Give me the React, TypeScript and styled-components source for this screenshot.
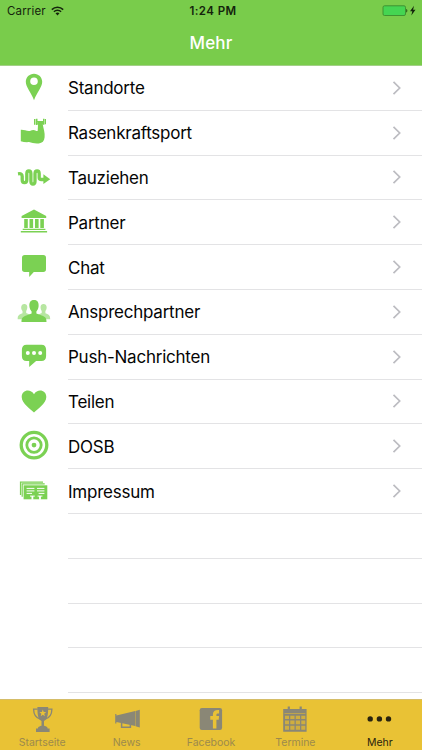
import React from "react";
import styled, { createGlobalStyle } from "styled-components";

const GREEN = "#7bd153";
const GRAY = "#8a8776";

const GlobalStyle = createGlobalStyle`
  * { box-sizing: border-box; }
  body { margin: 0; background: #fff; font-family: Inter, "Liberation Sans", sans-serif; }
`;

const Screen = styled.div`
  width: 422px;
  height: 750px;
  display: flex;
  flex-direction: column;
  overflow: hidden;
  background: #fff;
`;

const Header = styled.header`
  flex: none;
  height: 66px;
  background: #79cc4b;
  border-bottom: 1px solid #a3cf87;
`;

const StatusBar = styled.div`
  height: 22px;
  display: grid;
  grid-template-columns: 1fr auto 1fr;
  align-items: center;
  padding: 0 5px 0 7px;
  font-size: 11.5px;
  line-height: 22px;
  color: #14240c;
`;

const Carrier = styled.div`
  display: flex;
  align-items: center;
  gap: 5px;
  letter-spacing: 0.15px;
`;

const Clock = styled.div`
  font-weight: 600;
  letter-spacing: 0.42px;
  padding-left: 2px;
`;

const Power = styled.div`
  display: flex;
  justify-content: flex-end;
`;

const Title = styled.h1`
  margin: 0;
  height: 43px;
  line-height: 42px;
  text-align: center;
  color: #fff;
  font-size: 17px;
  font-weight: 500;
  letter-spacing: 0.15px;
`;

const List = styled.main`
  flex: 1;
  min-height: 0;
  overflow: hidden;
`;

const Row = styled.div`
  height: 44.8px;
  display: grid;
  grid-template-columns: 68px 1fr;
`;

const RowIcon = styled.svg`
  display: block;
  width: 68px;
  height: 44.8px;
  fill: ${GREEN};
`;

const RowBody = styled.div`
  display: flex;
  align-items: center;
  justify-content: space-between;
  padding-right: 19px;
  border-bottom: 1px solid #e3e3e5;
`;

const Label = styled.span`
  padding-top: 1px;
  font-size: 17px;
  line-height: 22px;
  letter-spacing: -0.24px;
  color: #050505;
`;

const Tabs = styled.nav`
  flex: none;
  height: 51px;
  display: grid;
  grid-template-columns: repeat(5, 1fr);
  background: #e9c235;
  border-top: 1px solid #d5bd68;
`;

const Tab = styled.div<{ $active?: boolean }>`
  display: flex;
  flex-direction: column;
  align-items: center;
  color: ${(p) => (p.$active ? "#29230f" : "#9c8a4c")};
  font-size: 10.5px;
  line-height: 14px;
  letter-spacing: -0.03px;
`;

const TabIcon = styled.svg`
  display: block;
  width: 40px;
  height: 36px;
  fill: ${GRAY};
`;

const items: { label: string; icon: React.ReactNode }[] = [
  {
    label: "Standorte",
    icon: (
      <path
        fillRule="evenodd"
        d="M34 8.1c-4.7 0-8.2 3.6-8.2 8.1 0 5.2 5.2 10.7 8.2 18.4 3-7.700 8.200-13.200 8.200-18.400 0-4.500-3.500-8.100-8.200-8.100zM34 11.800a3.800 3.800 0 1 1 0 7.600 3.800 3.800 0 0 1 0-7.600z"
      />
    ),
  },
  {
    label: "Rasenkraftsport",
    icon: (
      <>
        <path d="M20.800 19.200c3-.2 5.600 1.300 8.200 1.200 1.500-.1 2.500-1.200 4.400-1.100 2.100.1 3 1.600 4.300.8l.3-5.800-.9-1.200 1-2.300h4.500l.8 1.700-.6 1.700c.7 3.700 2.300 8.100 1.800 12.500-.3 3.800-2.300 5.900-5.800 6.100-4.300.3-6.600-.4-9.800-1.300-2.700.3-5.800-.1-8.200-.8z" />
        <path d="M34 8.500h1.500v5.700H34zM36 8.100h1.500v6.400H36zM37.500 10.400h6v1.400h-6zM43 8.100h1.400v6H43zM44.800 8.500h1.200v5.100h-1.200z" />
      </>
    ),
  },
  {
    label: "Tauziehen",
    icon: (
      <>
        <path
          d="M18 18.200c3.400-.5 4.200.7 4.200 2.700v3.300c0 3.800 4.600 3.800 4.600 0v-6c0-3.700 4.100-3.700 4.100 0v7.500c0 3.700 4.100 3.700 4.100 0v-7.500c0-3.700 4.200-3.700 4.200 0v4c0 1.300.8 1.700 2.300 1.700h4"
          fill="none"
          stroke={GREEN}
          strokeWidth="3.300"
        />
        <path d="M43.400 18.700l6.800 5-6.800 4.600z" />
      </>
    ),
  },
  {
    label: "Partner",
    icon: (
      <path d="M34 10l12.200 6.300v2H21.600v-2zM24.200 19.500h3.600v9h-3.600zM29.500 19.500h3.600v9h-3.600zM35 19.500h3.600v9H35zM40.300 19.500h3.600v9h-3.600zM22.700 29.200h22.700v1.300H22.700zM20.800 31.500h26.300v1.500H20.800z" />
    ),
  },
  {
    label: "Chat",
    icon: (
      <path d="M24.700 10.300h18.600a2.700 2.700 0 0 1 2.700 2.700v11.700a2.700 2.700 0 0 1-2.700 2.700h-9.500l-4.600 5v-5h-4.500a2.700 2.700 0 0 1-2.700-2.700V13a2.700 2.700 0 0 1 2.700-2.700z" />
    ),
  },
  {
    label: "Ansprechpartner",
    icon: (
      <>
        <path
          opacity=".55"
          d="M24.300 14.500c3.600-.2 3.700 4.400 1.900 7v2l4.500 2v4.100H17.700c0-4 1-4.300 4.800-6v-2.100c-2-2.500-1.900-6.800 1.800-7zM43.600 14.500c-3.600-.2-3.700 4.400-1.900 7v2l-4.500 2v4.100h13c0-4-1-4.300-4.800-6v-2.100c2-2.500 1.900-6.800-1.800-7z"
        />
        <path d="M34 10.300c3.700 0 4.900 2.500 4.600 6.400-.2 2.100-1 3.900-2.200 5.100v2.100l5.300 2.100c4.200 1.500 4.800 3.100 4.800 6.500h-25c0-3.400.6-5 4.800-6.500l5.300-2.100v-2.100c-1.200-1.200-2-3-2.200-5.100-.3-3.900.9-6.400 4.600-6.400z" />
      </>
    ),
  },
  {
    label: "Push-Nachrichten",
    icon: (
      <>
        <path d="M26.600 10.100h14.800c3.200 0 4.700 2 4.700 4.900v6.300c0 3.200-1.600 5.200-4.700 5.200h-5.300l-6.900 5.900v-5.900h-2.600c-3.200 0-4.700-2-4.700-5.200V15c0-2.900 1.500-4.900 4.700-4.900z" />
        <g fill="#fff">
          <circle cx="27.800" cy="18.500" r="2" />
          <circle cx="34" cy="18.500" r="2" />
          <circle cx="40.200" cy="18.500" r="2" />
        </g>
      </>
    ),
  },
  {
    label: "Teilen",
    icon: (
      <path d="M34 32.800C31 29.800 21.700 24 21.700 17.400c0-7.300 8.800-8.700 12.300-2.800 3.500-5.900 12.300-4.500 12.300 2.800C46.300 24 37 29.800 34 32.800z" />
    ),
  },
  {
    label: "DOSB",
    icon: (
      <>
        <g fill="none" stroke={GREEN}>
          <circle cx="34" cy="21.500" r="12.800" strokeWidth="3.300" />
          <circle cx="34" cy="21.500" r="7.200" strokeWidth="2.800" />
        </g>
        <circle cx="34" cy="21.500" r="2.400" />
      </>
    ),
  },
  {
    label: "Impressum",
    icon: (
      <>
        <path d="M20.500 26.500V13.600H43M22.200 28.200v-13h22.500" fill="none" stroke={GREEN} strokeWidth="1.200" />
        <path d="M23.600 16.700h23.700v14H23.600z" />
        <path
          d="M26.600 19.800h7.800M26.600 22.300h7.800M26.600 24.800h5.400M37 19.800h7.400M37 22.300h7.400M38.600 24.800h5.800M30 27.500h4.800M37.600 27.500h4.800"
          fill="none"
          stroke="#fff"
          strokeWidth="1"
        />
        <path d="M32.400 27.500v3.600M40 27.500v3.600" fill="none" stroke="#fff" strokeWidth="1.800" />
      </>
    ),
  },
];

const tabs: { label: string; active?: boolean; icon: React.ReactNode }[] = [
  {
    label: "Startseite",
    icon: (
      <>
        <path d="M15.400 7h10.800c0 9.600-1.200 12.400-4.200 14v4.700c3.500 1 3.600 1.700 3.600 2.700h2V32H14v-3.600h2c0-1 .1-1.700 3.500-2.700V21c-3-1.600-4.100-4.400-4.100-14z" />
        <path d="M15.700 9.200h-4.100c.1 5.500 1.700 8.500 6.700 9.900M25.800 9.200h4.100c-.1 5.500-1.700 8.500-6.700 9.900" fill="none" stroke={GRAY} strokeWidth="1.300" />
        <path fill="#e9c235" d="M20.800 9.600l.9 2.400 2.500.1-2 1.600.7 2.500-2.100-1.400-2.100 1.400.7-2.500-2-1.600 2.500-.1z" />
      </>
    ),
  },
  {
    label: "News",
    icon: (
      <>
        <path d="M8.200 14h1.200v1.600l18.800-4.500v15L9.400 21.900v1.500H8.200zM28.600 11l4.200-1.200v17.600l-4.200-1.200z" />
        <path d="M14.600 22.600v4.700h8.800v-2.700" fill="none" stroke={GRAY} strokeWidth="1.500" />
      </>
    ),
  },
  {
    label: "Facebook",
    icon: (
      <>
        <rect x="8.700" y="8" width="22.400" height="22" rx="2.200" />
        <path fill="#e9c235" d="M21.900 28.400v-8.600h-2.600V16h2.600v-1.700c0-3.100 2-4.500 6.200-4.300v3.500c-2.100-.1-2.700.3-2.700 1.600v.9h2.700l-.4 3.800h-2.300v8.600z" />
      </>
    ),
  },
  {
    label: "Termine",
    icon: (
      <>
        <path d="M8.200 9h23.400v22.700H8.200zM12.700 6.500h2.200V10h-2.200zM24.600 6.500h2.200V10h-2.200z" />
        <path
          d="M9.500 13h20.800v.7H9.500zM10 15.800h4v3.300h-4zM15.300 15.800h4.200v3.300h-4.200zM20.800 15.800H25v3.300h-4.200zM26.300 15.800h4v3.300h-4zM10 20.500h4v3.800h-4zM15.300 20.500h4.200v3.800h-4.200zM20.800 20.500H25v3.800h-4.200zM26.300 20.500h4v3.800h-4zM10 25.800h4v4h-4zM15.300 25.800h4.200v4h-4.200zM20.800 25.800H25v4h-4.200zM26.300 25.800h4v4h-4z"
          fill="#cfae3f"
        />
      </>
    ),
  },
  {
    label: "Mehr",
    active: true,
    icon: (
      <g fill="#29230f">
        <circle cx="10.200" cy="18.900" r="2.700" />
        <circle cx="19.400" cy="18.900" r="2.700" />
        <circle cx="28.500" cy="18.900" r="2.700" />
      </g>
    ),
  },
];

export default function App() {
  return (
    <Screen>
      <GlobalStyle />
      <Header>
        <StatusBar>
          <Carrier>
            Carrier
            <svg width="13" height="10" viewBox="0 0 13 10" fill="none" stroke="#14240c" strokeWidth="1.500">
              <path d="M.8 3.600c3.200-3.200 8.200-3.200 11.400 0M2.900 5.800c2-2 5.200-2 7.200 0" />
              <path d="M4.500 7.300c1.200-1 2.800-1 4 0l-2 2.100z" fill="#14240c" stroke="none" />
            </svg>
          </Carrier>
          <Clock>1:24 PM</Clock>
          <Power>
            <svg width="35" height="12" viewBox="0 0 35 12">
              <rect x="1" y=".8" width="22.500" height="9.700" rx="1.500" fill="#45d552" stroke="#3c8c2e" strokeWidth=".9" />
              <path d="M24.200 4c1.500.2 1.500 3.200 0 3.500z" fill="#285719" />
              <path d="M32 .8l-4 5.500h2.300l-1 4.200 4.200-5.700h-2.400z" fill="#14240c" />
            </svg>
          </Power>
        </StatusBar>
        <Title>Mehr</Title>
      </Header>
      <List>
        {items.map((item) => (
          <Row key={item.label}>
            <RowIcon viewBox="0 0.4 68 44.8">{item.icon}</RowIcon>
            <RowBody>
              <Label>{item.label}</Label>
              <svg width="12" height="16" viewBox="0 0 12 16" fill="none" stroke="#bcbcc1" strokeWidth="1.700">
                <path d="M2.500 1.800L8.700 8l-6.200 6.200" />
              </svg>
            </RowBody>
          </Row>
        ))}
        {[0, 1, 2, 3].map((n) => (
          <Row key={n}>
            <span />
            <RowBody />
          </Row>
        ))}
      </List>
      <Tabs>
        {tabs.map((tab) => (
          <Tab key={tab.label} $active={tab.active}>
            <TabIcon viewBox="0 0 40 36">{tab.icon}</TabIcon>
            {tab.label}
          </Tab>
        ))}
      </Tabs>
    </Screen>
  );
}
